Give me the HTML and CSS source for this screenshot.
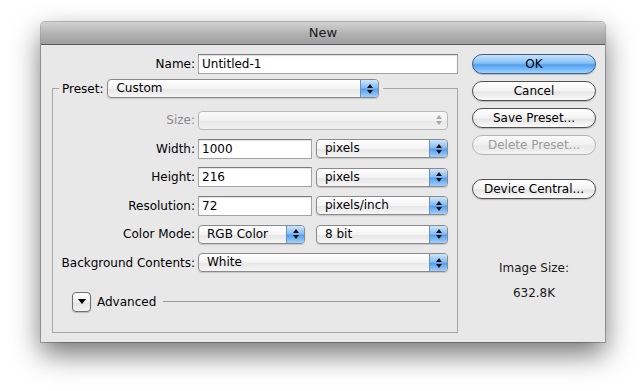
FILE: index.html
```html
<!DOCTYPE html>
<html lang="en">
<head>
    <meta charset="UTF-8">
    <title>New</title>
    <link rel="stylesheet" href="styles.css">
</head>
<body>
    <div class="window">
        <div class="titlebar">New</div>
        <div class="content">
            <div class="form">
                <div class="row name-row">
                    <span class="label">Name:</span>
                    <div class="field name-field">Untitled-1</div>
                </div>

                <fieldset class="preset">
                    <legend class="preset-legend">
                        <span>Preset:</span>
                        <div class="popup preset-popup">
                            <span class="popup-text">Custom</span>
                            <span class="arrows"><svg width="6" height="10" viewBox="0 0 6 10"><path d="M3 0L6 4H0z M0 6H6L3 10z"/></svg></span>
                        </div>
                    </legend>

                    <div class="row">
                        <span class="label disabled">Size:</span>
                        <div class="popup popup-off wide">
                            <span class="popup-text"></span>
                            <span class="arrows"><svg width="6" height="10" viewBox="0 0 6 10"><path d="M3 0L6 4H0z M0 6H6L3 10z"/></svg></span>
                        </div>
                    </div>
                    <div class="row">
                        <span class="label">Width:</span>
                        <div class="field num-field">1000</div>
                        <div class="popup unit">
                            <span class="popup-text">pixels</span>
                            <span class="arrows"><svg width="6" height="10" viewBox="0 0 6 10"><path d="M3 0L6 4H0z M0 6H6L3 10z"/></svg></span>
                        </div>
                    </div>
                    <div class="row">
                        <span class="label">Height:</span>
                        <div class="field num-field">216</div>
                        <div class="popup unit">
                            <span class="popup-text">pixels</span>
                            <span class="arrows"><svg width="6" height="10" viewBox="0 0 6 10"><path d="M3 0L6 4H0z M0 6H6L3 10z"/></svg></span>
                        </div>
                    </div>
                    <div class="row">
                        <span class="label">Resolution:</span>
                        <div class="field num-field">72</div>
                        <div class="popup unit">
                            <span class="popup-text">pixels/inch</span>
                            <span class="arrows"><svg width="6" height="10" viewBox="0 0 6 10"><path d="M3 0L6 4H0z M0 6H6L3 10z"/></svg></span>
                        </div>
                    </div>
                    <div class="row">
                        <span class="label">Color Mode:</span>
                        <div class="popup mode">
                            <span class="popup-text">RGB Color</span>
                            <span class="arrows"><svg width="6" height="10" viewBox="0 0 6 10"><path d="M3 0L6 4H0z M0 6H6L3 10z"/></svg></span>
                        </div>
                        <div class="popup unit bits">
                            <span class="popup-text">8 bit</span>
                            <span class="arrows"><svg width="6" height="10" viewBox="0 0 6 10"><path d="M3 0L6 4H0z M0 6H6L3 10z"/></svg></span>
                        </div>
                    </div>
                    <div class="row">
                        <span class="label">Background Contents:</span>
                        <div class="popup wide">
                            <span class="popup-text">White</span>
                            <span class="arrows"><svg width="6" height="10" viewBox="0 0 6 10"><path d="M3 0L6 4H0z M0 6H6L3 10z"/></svg></span>
                        </div>
                    </div>

                    <div class="advanced">
                        <div class="disclosure"><svg width="8" height="5" viewBox="0 0 8 5"><path d="M0 0H8L4 5z"/></svg></div>
                        <span>Advanced</span>
                        <div class="rule"></div>
                    </div>
                </fieldset>
            </div>

            <div class="side">
                <div class="btn default">OK</div>
                <div class="btn">Cancel</div>
                <div class="btn">Save Preset...</div>
                <div class="btn btn-off">Delete Preset...</div>
                <div class="btn device">Device Central...</div>
                <div class="image-size">
                    <div>Image Size:</div>
                    <div>632.8K</div>
                </div>
            </div>
        </div>
    </div>
</body>
</html>
```

FILE: styles.css
```css
body {
    margin: 0;
    padding: 22px 0 49px;
    background-color: #ffffff;
    font-family: "DejaVu Sans", "Liberation Sans", sans-serif;
    font-size: 12px;
    color: #000000;
}

.window {
    width: 564px;
    height: 320px;
    margin-left: 41px;
    background-color: #e8e8e8;
    border-radius: 4px 4px 0 0;
    box-shadow: 0 0 0 1px rgba(0, 0, 0, 0.25), 0 12px 28px rgba(0, 0, 0, 0.55);
    display: flex;
    flex-direction: column;
}

.titlebar {
    height: 22px;
    line-height: 22px;
    text-align: center;
    font-size: 13px;
    color: #1a1a1a;
    background: linear-gradient(#d2d2d2, #b4b4b4 50%, #9e9e9e);
    border-bottom: 1px solid #5a5a5a;
    border-radius: 4px 4px 0 0;
}

.content {
    display: flex;
    gap: 14px;
    padding: 9px 9px 0 11px;
}

.form {
    width: 406px;
}

.row {
    display: flex;
    align-items: center;
    height: 20px;
    gap: 3px;
    margin-top: 8.6px;
}

.label {
    width: 142px;
    text-align: right;
    flex: none;
}

.label.disabled {
    color: #8a8a8a;
}

.name-row {
    margin-top: 0;
}

.name-row .label {
    width: 143px;
}

.field {
    box-sizing: border-box;
    height: 20px;
    padding: 0 3px;
    line-height: 19px;
    background-color: #ffffff;
    border: 1px solid #a3a3a3;
    border-top-color: #7c7c7c;
    box-shadow: inset 0 1px 1px rgba(0, 0, 0, 0.12);
}

.name-field {
    width: 260px;
}

.num-field {
    width: 114px;
    margin-right: 1px;
}

.preset {
    margin: 5px 0 0;
    padding: 12px 0 20px;
    border: 1px solid #a6a6a6;
    min-width: 0;
}

.preset .row:first-of-type {
    margin-top: 0;
}

.preset-legend {
    display: flex;
    align-items: center;
    gap: 4px;
    margin-left: 6px;
    padding: 0 4px 0 3px;
}

.popup {
    box-sizing: border-box;
    height: 19px;
    display: flex;
    align-items: stretch;
    border: 1px solid #8a8a8a;
    border-radius: 4px;
    background: linear-gradient(#ffffff, #f4f4f4 50%, #e7e7e7 55%, #f6f6f6);
    box-shadow: 0 1px 1px rgba(0, 0, 0, 0.15);
    overflow: hidden;
}

.popup-text {
    flex: 1;
    padding-left: 8px;
    line-height: 17px;
}

.arrows {
    width: 17px;
    display: flex;
    align-items: center;
    justify-content: center;
    border-left: 1px solid #6d8fc0;
    background: linear-gradient(#cfe5fb, #86bdf3 45%, #559ff0 55%, #a2d0fb);
}

.arrows svg {
    fill: #111111;
}

.popup-off {
    border-color: #b9b9b9;
    box-shadow: none;
    background: linear-gradient(#fafafa, #f0f0f0 50%, #e8e8e8 55%, #f1f1f1);
}

.popup-off .arrows {
    border-left: none;
    background: none;
}

.popup-off .arrows svg {
    fill: #a8a8a8;
}

.preset-popup {
    width: 272px;
}

.wide {
    width: 250px;
}

.unit {
    width: 132px;
}

.mode {
    width: 107px;
}

.bits {
    margin-left: 8px;
}

.advanced {
    display: flex;
    align-items: center;
    gap: 6px;
    margin-top: 19px;
    padding: 0 17px 0 19px;
    height: 20px;
}

.disclosure {
    box-sizing: border-box;
    width: 19px;
    height: 20px;
    display: flex;
    align-items: center;
    justify-content: center;
    border: 1px solid #6e6e6e;
    border-radius: 4px;
    background: linear-gradient(#ffffff, #f1f1f1 50%, #e2e2e2 55%, #f4f4f4);
    box-shadow: 0 1px 1px rgba(0, 0, 0, 0.2);
}

.rule {
    flex: 1;
    margin-left: 1px;
    border-top: 1px solid #9a9a9a;
}

.side {
    width: 124px;
    display: flex;
    flex-direction: column;
    gap: 7px;
}

.btn {
    box-sizing: border-box;
    height: 20px;
    line-height: 18px;
    text-align: center;
    font-size: 12px;
    border: 1px solid #505050;
    border-radius: 10px;
    background: linear-gradient(#ffffff, #f3f3f3 50%, #e4e4e4 55%, #fbfbfb);
    box-shadow: 0 1px 1px rgba(0, 0, 0, 0.2);
}

.default {
    border-color: #3d5f91;
    background: linear-gradient(#c6e2fb, #88c1f5 45%, #4f9ff0 55%, #a0d4fd);
}

.btn-off {
    color: #9a9a9a;
    border-color: #b4b4b4;
    box-shadow: none;
    background: linear-gradient(#fafafa, #f0f0f0 50%, #e8e8e8 55%, #f4f4f4);
}

.device {
    margin-top: 17px;
}

.image-size {
    margin-top: 50px;
    text-align: center;
    line-height: 25px;
    color: #1a1a1a;
}
```
